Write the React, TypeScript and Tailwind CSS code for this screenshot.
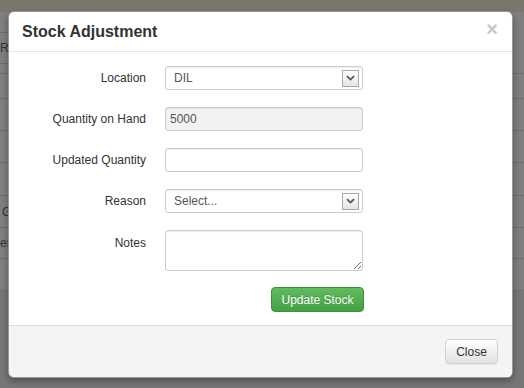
const font = { fontFamily: '"Liberation Sans", Arial, sans-serif' };

const Chevron = () => (
  <svg width="9" height="6" viewBox="0 0 9 6">
    <path d="M1 1.2 L4.5 4.6 L8 1.2" fill="none" stroke="#555" strokeWidth="1.8" />
  </svg>
);

const FakeSelect = ({ value }: { value: string }) => (
  <div className="w-[198px] h-[24px] border border-[#ccc] rounded-[3px] bg-white flex items-center pl-[8px] pr-[3px] text-[12px] text-[#555] shadow-[inset_0_1px_1px_rgba(0,0,0,0.075)]">
    <span>{value}</span>
    <div className="ml-auto w-[17px] h-[17px] border border-[#a9a9a9] bg-gradient-to-b from-white to-[#e4e4e4] flex items-center justify-center">
      <Chevron />
    </div>
  </div>
);

const Row = ({ label, children, top }: { label: string; children: React.ReactNode; top?: boolean }) => (
  <div className={`flex ${top ? 'items-start' : 'items-center'}`}>
    <label className={`w-[137px] text-right text-[12px] leading-[16px] text-[#333] ${top ? 'pt-[5px]' : ''}`}>{label}</label>
    <div className="ml-[19px] flex">{children}</div>
  </div>
);

const line = 'border-b border-[#6e6e6e]';

const Backdrop = () => (
  <div className="w-[524px] h-[388px] bg-[#777] flex flex-col">
    <div className="h-[12px] bg-[#7a776f]" />
    <div className="h-[279px] bg-[#7f7f7f] text-[12px] text-[#333]">
      <div className={`w-[120px] h-[21px] ${line}`} />
      <div className={`w-[120px] h-[31px] ${line} flex items-center`}>
        <span>Re</span>
      </div>
      <div className={`h-[10px] ${line}`} />
      <div className={`h-[25px] ${line}`} />
      <div className={`h-[32px] ${line}`} />
      <div className={`h-[32px] ${line}`} />
      <div className={`h-[33px] ${line}`} />
      <div className={`h-[32px] ${line} flex items-center pl-[2px]`}>
        <span>G</span>
      </div>
      <div className={`h-[31px] ${line} flex items-center`}>
        <span>er</span>
      </div>
      <div className={`h-[32px] ${line}`} />
    </div>
  </div>
);

export default function App() {
  return (
    <div className="relative w-[524px] h-[388px] overflow-hidden" style={font}>
      <Backdrop />
      <div className="absolute left-[8px] top-[11px] w-[505px] h-[367px] bg-white rounded-[6px] border border-black/40 shadow-[0_3px_7px_rgba(0,0,0,0.35)] overflow-hidden flex flex-col">
        <div className="h-[40px] shrink-0 border-b border-[#e5e5e5] flex items-center pl-[13px] pr-[14px]">
          <h3 className="text-[16px] font-bold text-[#333]">Stock Adjustment</h3>
          <span className="ml-auto text-[20px] font-bold leading-none text-[#c8c8c8] -mt-[5px]">×</span>
        </div>
        <div className="flex-1 pt-[14px] flex flex-col gap-[17px]">
          <Row label="Location">
            <FakeSelect value="DIL" />
          </Row>
          <Row label="Quantity on Hand">
            <div className="w-[198px] h-[24px] border border-[#ccc] rounded-[3px] bg-[#f2f2f2] flex items-center px-[4px] text-[12px] text-[#555] shadow-[inset_0_1px_1px_rgba(0,0,0,0.075)]">5000</div>
          </Row>
          <Row label="Updated Quantity">
            <input className="block w-[198px] h-[24px] border border-[#ccc] rounded-[3px] bg-white px-[4px] text-[12px] text-[#555] shadow-[inset_0_1px_1px_rgba(0,0,0,0.075)] outline-none" />
          </Row>
          <Row label="Reason">
            <FakeSelect value="Select..." />
          </Row>
          <Row label="Notes" top>
            <textarea className="block w-[198px] h-[41px] border border-[#ccc] rounded-[3px] bg-white px-[4px] text-[12px] text-[#555] shadow-[inset_0_1px_1px_rgba(0,0,0,0.075)] outline-none" />
          </Row>
          <div className="w-[355px] -mt-[1px] flex justify-end">
            <button className="w-[93px] h-[25px] rounded-[4px] border border-[#3e8f3e] bg-gradient-to-b from-[#5fbc5f] to-[#43a043] text-white text-[12px] [text-shadow:0_-1px_0_rgba(0,0,0,0.2)]">Update Stock</button>
          </div>
        </div>
        <div className="h-[52px] shrink-0 border-t border-[#dddddd] bg-[#f4f4f4] flex items-center justify-end pr-[14px]">
          <button className="w-[53px] h-[25px] rounded-[4px] border border-[#d0d0d0] bg-gradient-to-b from-white to-[#e2e2e2] text-[#333] text-[12px] shadow-[0_1px_1px_rgba(0,0,0,0.05)]">Close</button>
        </div>
      </div>
    </div>
  );
}
